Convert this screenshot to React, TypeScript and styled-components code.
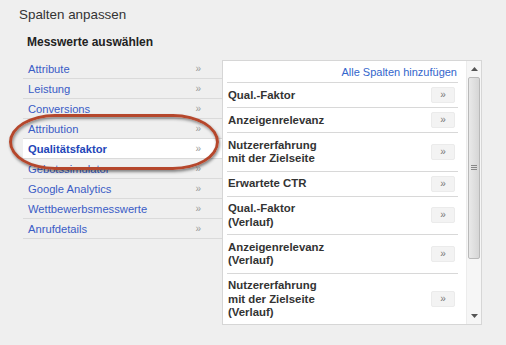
import React from "react";
import styled, { createGlobalStyle } from "styled-components";

const Global = createGlobalStyle`
  html, body { margin: 0; padding: 0; background: #efefef; }
  body { font-family: "Liberation Sans", Arial, sans-serif; color: #333; }
`;

const Page = styled.div`
  position: relative;
  width: 506px;
  height: 345px;
  overflow: hidden;
  background: #efefef;
`;

const Title = styled.div`
  padding: 7px 0 0 19px;
  font-size: 13.4px;
  line-height: 16px;
  color: #333;
`;

const Heading = styled.div`
  margin: 12px 0 0 27px;
  font-size: 12px;
  font-weight: bold;
  line-height: 14px;
  color: #222;
`;

const Main = styled.div`
  display: flex;
  align-items: flex-start;
  margin: 10px 0 0 23px;
`;

const List = styled.div`
  width: 199px;
  display: flex;
  flex-direction: column;
`;

const ListRow = styled.div<{ $active?: boolean }>`
  height: 19px;
  display: flex;
  align-items: center;
  justify-content: space-between;
  padding: 0 21px 0 5px;
  border-bottom: 1px solid #dadada;
  background: ${(p) => (p.$active ? "#fff" : "transparent")};
  font-size: 11.2px;
  font-weight: ${(p) => (p.$active ? "bold" : "normal")};
  color: ${(p) => (p.$active ? "#2446b8" : "#3a5cc6")};
`;

const Chev = styled.span`
  font-size: 10px;
  color: #9a9a9a;
  font-weight: normal;
`;

const Panel = styled.div`
  margin-top: 1px;
  width: 258px;
  height: 263px;
  border: 1px solid #d6d6d6;
  background: #fff;
  display: flex;
  overflow: hidden;
`;

const Content = styled.div`
  width: 243px;
  padding: 0 8px 0 4px;
  box-sizing: border-box;
`;

const Header = styled.div`
  height: 21px;
  display: flex;
  align-items: center;
  justify-content: flex-end;
  padding-right: 1px;
  border-bottom: 1px solid #d8d8d8;
  font-size: 11px;
  color: #3366cc;
`;

const Row = styled.div`
  display: flex;
  align-items: center;
  justify-content: space-between;
  padding: 0 3px 0 1px;
  border-bottom: 1px solid #d8d8d8;
  font-size: 11.4px;
  line-height: 13.5px;
  font-weight: bold;
  color: #333;
`;

const Label = styled.div`
  padding: 5.5px 0 5px;
`;

const AddButton = styled.div`
  width: 24px;
  height: 16px;
  box-sizing: border-box;
  flex: none;
  display: flex;
  align-items: center;
  justify-content: center;
  background: #f3f3f3;
  border: 1px solid #ebebeb;
  border-radius: 2px;
  font-size: 10px;
  line-height: 1;
  font-weight: normal;
  color: #777;
`;

const Scrollbar = styled.div`
  width: 15px;
  display: flex;
  flex-direction: column;
  background: #f6f6f6;
  border-left: 1px solid #ececec;
  box-sizing: border-box;
`;

const Arrow = styled.div`
  height: 16px;
  display: flex;
  align-items: center;
  justify-content: center;
`;

const Track = styled.div`
  flex: 1;
  display: flex;
  flex-direction: column;
  padding: 0 1px;
`;

const Thumb = styled.div`
  height: 180px;
  border: 1px solid #b9b9b9;
  border-radius: 2px;
  background: linear-gradient(to right, #e9e9e9, #d6d6d6);
  display: flex;
  align-items: center;
  justify-content: center;
`;

const Ring = styled.div`
  position: absolute;
  left: 9px;
  top: 114px;
  width: 204px;
  height: 50px;
  border: 3px solid #b5472c;
  border-radius: 46px / 28px;
  box-shadow: 1px 2px 3px rgba(0, 0, 0, 0.45), inset 1px 2px 3px rgba(0, 0, 0, 0.4);
  pointer-events: none;
`;

const categories = [
  "Attribute",
  "Leistung",
  "Conversions",
  "Attribution",
  "Qualitätsfaktor",
  "Gebotssimulator",
  "Google Analytics",
  "Wettbewerbsmesswerte",
  "Anrufdetails",
];

const metrics: string[][] = [
  ["Qual.-Faktor"],
  ["Anzeigenrelevanz"],
  ["Nutzererfahrung", "mit der Zielseite"],
  ["Erwartete CTR"],
  ["Qual.-Faktor", "(Verlauf)"],
  ["Anzeigenrelevanz", "(Verlauf)"],
  ["Nutzererfahrung", "mit der Zielseite", "(Verlauf)"],
];

export default function App() {
  return (
    <Page>
      <Global />
      <Title>Spalten anpassen</Title>
      <Heading>Messwerte auswählen</Heading>
      <Main>
        <List>
          {categories.map((c) => (
            <ListRow key={c} $active={c === "Qualitätsfaktor"}>
              <span>{c}</span>
              <Chev>»</Chev>
            </ListRow>
          ))}
        </List>
        <Panel>
          <Content>
            <Header>Alle Spalten hinzufügen</Header>
            {metrics.map((lines, i) => (
              <Row key={i}>
                <Label>
                  {lines.map((l, j) => (
                    <div key={j}>{l}</div>
                  ))}
                </Label>
                <AddButton>»</AddButton>
              </Row>
            ))}
          </Content>
          <Scrollbar>
            <Arrow>
              <svg width="7" height="4" viewBox="0 0 7 4">
                <path d="M0 4 L3.5 0 L7 4 Z" fill="#555" />
              </svg>
            </Arrow>
            <Track>
              <Thumb>
                <svg width="6" height="6" viewBox="0 0 6 6">
                  <path d="M0 0.5H6M0 2.5H6M0 4.5H6" stroke="#888" strokeWidth="1" />
                </svg>
              </Thumb>
            </Track>
            <Arrow>
              <svg width="7" height="4" viewBox="0 0 7 4">
                <path d="M0 0 L3.5 4 L7 0 Z" fill="#555" />
              </svg>
            </Arrow>
          </Scrollbar>
        </Panel>
      </Main>
      <Ring />
    </Page>
  );
}
